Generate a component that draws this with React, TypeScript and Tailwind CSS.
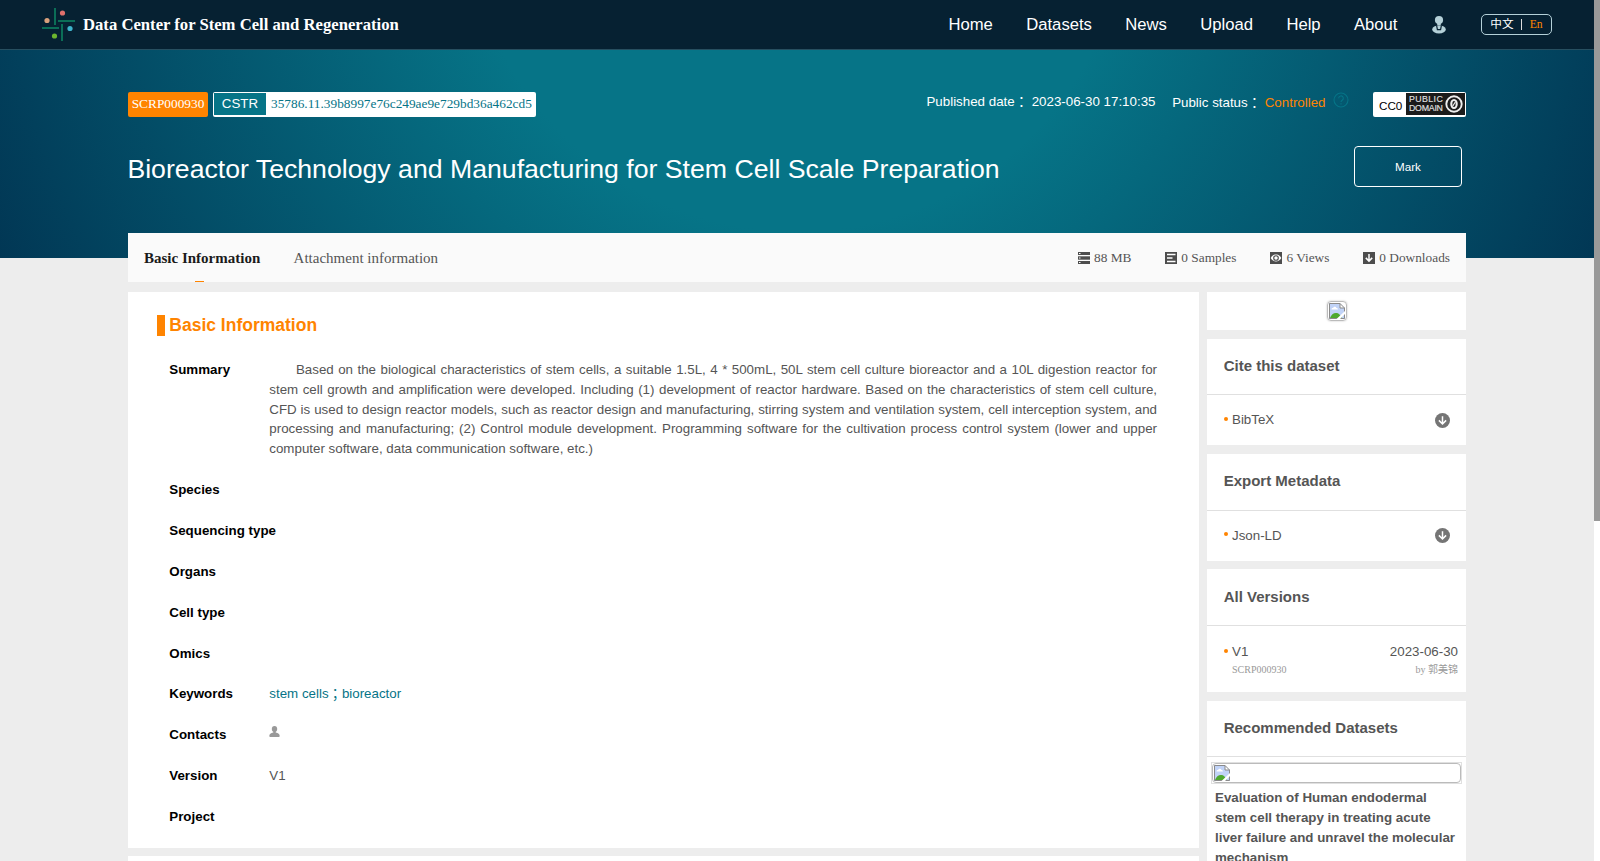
import React from 'react'

const SANS = "font-['Liberation_Sans','Noto_Sans_CJK_JP',sans-serif]"
const SERIF = "font-['Liberation_Serif','Noto_Sans_CJK_JP',serif]"

const navItems = ['Home', 'Datasets', 'News', 'Upload', 'Help', 'About']

const Logo = () => (
    <svg width="33" height="33" viewBox="0 0 33 33" className="shrink-0">
        <g fill="#0b6e57">
            <rect x="12" y="0" width="2" height="17" />
            <rect x="16" y="12" width="17" height="2" />
            <rect x="19" y="16" width="2" height="17" />
            <rect x="0" y="19" width="17" height="2" />
        </g>
        <circle cx="20.5" cy="5" r="2.6" fill="#e0706c" />
        <circle cx="5" cy="12.5" r="2.6" fill="#d9a07c" />
        <circle cx="28" cy="20.5" r="2.6" fill="#3fb4cc" />
        <circle cx="12.5" cy="28" r="2.6" fill="#6cb52f" />
    </svg>
)

const UserIcon = () => (
    <svg width="14" height="18" viewBox="0 0 14 18" className="shrink-0" fill="#b4d0d8">
        <circle cx="7" cy="4.100" r="4.100" />
        <path d="M5.200 7h3.600v2.500H5.200z" />
        <ellipse cx="7" cy="13.400" rx="6.800" ry="4" />
        <path d="M4.600 9.400L5.400 13.600H8.600L9.400 9.400" fill="none" stroke="#062132" strokeWidth="1.200" />
    </svg>
)

const ContactIcon = () => (
    <svg width="11" height="11" viewBox="0 0 11 11" className="mt-px block" fill="#999">
        <ellipse cx="5.500" cy="2.900" rx="2.700" ry="2.900" />
        <path d="M4.300 5h2.400v1.600c2.600.5 4 1.500 4 3.400c0 .6-.3 1-.9 1H1.200c-.6 0-.9-.4-.9-1c0-1.900 1.400-2.900 4-3.400z" />
    </svg>
)

const HelpIcon = () => (
    <svg width="16" height="16" viewBox="0 0 16 16" className="shrink-0" fill="none" stroke="#067487" strokeWidth="1.100">
        <circle cx="8" cy="8" r="7" />
        <path d="M5.700 6.300a2.300 2.300 0 1 1 3.500 1.900c-.8.500-1.200.9-1.200 1.900M8 11.200v1.200" />
    </svg>
)

const PublicDomain = () => (
    <div className="flex h-[22px] w-[59px] items-center bg-[#1b1b1b] pl-[3px] text-[#dedede]">
        <div className={`${SANS} w-[35px] text-[8.8px] leading-[9px] [-webkit-text-stroke:0.2px_#dedede]`}>
            <div className="tracking-[0.4px]">PUBLIC</div>
            <div className="tracking-[-0.25px]">DOMAIN</div>
        </div>
        <svg width="18" height="18" viewBox="0 0 18 18" className="ml-[1px] shrink-0" fill="none" stroke="#eee">
            <circle cx="9" cy="9" r="7.700" strokeWidth="1.900" />
            <ellipse cx="9" cy="9" rx="2.700" ry="4" strokeWidth="2.100" />
            <path d="M7.800 11L10.300 7" strokeWidth="1.200" />
        </svg>
    </div>
)

const BrokenImage = () => (
    <svg width="16" height="16" viewBox="0 0 16 16" className="block shrink-0">
        <path d="M0 0H11L16 5V16H0z" fill="#c1d3f7" />
        <path d="M2.500 6.400c0-1 .8-1.500 1.600-1.400c.5-1.600 2.900-1.600 3.300 0c1 0 1.600.6 1.500 1.400z" fill="#fff" />
        <path d="M1 15c1.200-3.500 3.700-5.300 6.500-5c2 .2 3.500 1.500 5.500 5z" fill="#4fa92f" />
        <path d="M11 .500H.5V15.500H15.500V5" fill="none" stroke="#8a8a8a" />
        <path d="M11 0V5H16z" fill="#fff" />
        <path d="M11 .500V5H15.500L11 .500" fill="none" stroke="#8a8a8a" />
        <path d="M16 8L7.500 16H11L16 11z" fill="#fff" />
    </svg>
)

const DownArrow = () => (
    <svg width="15" height="15" viewBox="0 0 15 15" className="block shrink-0">
        <circle cx="7.500" cy="7.500" r="7.500" fill="#757575" />
        <path d="M7.500 3.200V10.800M3.900 7.400L7.500 11L11.100 7.400" fill="none" stroke="#fff" strokeWidth="1.500" />
    </svg>
)

const StatIcon = ({ type }: { type: string }) => (
    <svg width="12" height="12" viewBox="0 0 12 12" className="mr-1 shrink-0">
        {type !== 'size' && <rect width="12" height="12" fill="#4d4d4d" />}
        {type === 'size' && (
            <g>
                <rect width="12" height="3" fill="#4d4d4d" />
                <rect y="4.300" width="12" height="3.400" fill="#4d4d4d" />
                <rect y="9" width="12" height="3" fill="#4d4d4d" />
                <path d="M1 1.500h1.500M1 6h1.500M1 10.500h1.500" stroke="#fff" />
            </g>
        )}
        {type === 'samples' && <path d="M2 2.500h8.500M2 6h5.500M2 9.500h8.500" stroke="#fff" strokeWidth="1.400" />}
        {type === 'views' && (
            <g>
                <path d="M.7 6C3 1.400 9 1.400 11.300 6C9 10.600 3 10.600.7 6z" fill="#fff" />
                <circle cx="6" cy="6" r="2.300" fill="#fff" stroke="#4d4d4d" strokeWidth="1.100" />
            </g>
        )}
        {type === 'downloads' && <path d="M6 2V9M2.800 5.900L6 9.100L9.200 5.900" fill="none" stroke="#fff" strokeWidth="1.500" />}
    </svg>
)

// full-width punctuation sits too high next to latin text
const Punct = ({ children }: { children: string }) => <span className="relative top-px">{children}</span>

const stats = [
    { type: 'size', label: '88 MB' },
    { type: 'samples', label: '0 Samples' },
    { type: 'views', label: '6 Views' },
    { type: 'downloads', label: '0 Downloads' },
]

const summary =
    'Based on the biological characteristics of stem cells, a suitable 1.5L, 4 * 500mL, 50L stem cell culture bioreactor and a 10L digestion reactor for stem cell growth and amplification were developed. Including (1) development of reactor hardware. Based on the characteristics of stem cell culture, CFD is used to design reactor models, such as reactor design and manufacturing, stirring system and ventilation system, cell interception system, and processing and manufacturing; (2) Control module development. Programming software for the cultivation process control system (lower and upper computer software, data communication software, etc.)'

const fields: { label: string; value?: React.ReactNode; className?: string }[] = [
    { label: 'Summary', value: <p className="indent-[26.67px] text-justify">{summary}</p> },
    { label: 'Species' },
    { label: 'Sequencing type' },
    { label: 'Organs' },
    { label: 'Cell type' },
    { label: 'Omics' },
    {
        label: 'Keywords',
        className: '-mt-px',
        value: (
            <span className="text-[#067487]">
                stem cells<Punct>；</Punct>bioreactor
            </span>
        ),
    },
    { label: 'Contacts', value: <ContactIcon /> },
    { label: 'Version', value: 'V1' },
    { label: 'Project' },
]

type SideCardProps = {
    title: string
    className: string
    titleClass?: string
    children: React.ReactNode
}

const SideCard = ({ title, className, titleClass = 'h-[56px] leading-[54px]', children }: SideCardProps) => (
    <div className={`bg-white ${className}`}>
        <h3 className={`border-b border-[#e0e0e0] pl-[16.67px] text-[15px] font-bold ${titleClass}`}>{title}</h3>
        {children}
    </div>
)

const FileRow = ({ name, className, dotClass }: { name: string; className: string; dotClass: string }) => (
    <div className={`flex items-center pl-[17px] pr-4 ${className}`}>
        <span className={`mr-1 size-1 self-start rounded-full bg-[#ff8400] ${dotClass}`}></span>
        <span className="flex-1">{name}</span>
        <DownArrow />
    </div>
)

const Header = () => (
    <header className="flex h-[50px] items-center border-b border-[#274f60] bg-[#062132] pl-[42px] pr-[42px] text-white">
        <Logo />
        <div className={`${SERIF} ml-2 flex-1 whitespace-nowrap text-[16.67px] font-bold`}>
            Data Center for Stem Cell and Regeneration
        </div>
        <nav className="mr-[0.5px] flex gap-[33.33px] text-[16.67px]">
            {navItems.map((item) => (
                <a key={item}>{item}</a>
            ))}
        </nav>
        <div className="ml-[34px] mr-[35px]">
            <UserIcon />
        </div>
        <div className={`${SERIF} flex h-[21px] w-[71px] items-center justify-center rounded-[5px] border border-[#b4d0d8] text-[11.67px]`}>
            <span>中文</span>
            <span className="ml-[7px] mr-[8px] h-[11px] w-px bg-[#ddd]"></span>
            <span className="text-[#ff8400]">En</span>
        </div>
    </header>
)

const Hero = () => (
    <div className="h-[208px] bg-[radial-gradient(circle_920px_at_50%_-150px,#067487_0%,#067487_36%,#013452_98%)] px-32 pt-[42px] text-[13.33px] text-white">
        <div className="flex h-[25px]">
            <div className={`${SERIF} w-20 rounded-[2px] bg-[#ff8400] text-center leading-[24px]`}>SCRP000930</div>
            <div className="ml-[5px] flex w-[323px] rounded-[2px] bg-white p-px">
                <div className="h-[22px] w-[52px] bg-[#067487] text-center leading-[22px]">CSTR</div>
                <div className={`${SERIF} ml-[5px] leading-[22px] text-[#067487]`}>35786.11.39b8997e76c249ae9e729bd36a462cd5</div>
            </div>
            <div className="ml-auto mr-[16.67px] whitespace-nowrap leading-[19px]">
                Published date<Punct>：</Punct> 2023-06-30 17:10:35
            </div>
            <div className="whitespace-nowrap leading-[21px]">
                Public status<Punct>：</Punct> <span className="text-[#ff8400]">Controlled</span>
            </div>
            <div className="ml-[7px] mr-[24.5px]">
                <HelpIcon />
            </div>
            <div className="flex w-[93px] justify-between rounded-[2px] bg-white p-px">
                <span className="pl-[5px] text-[11.67px] leading-[25px] text-black">CC0</span>
                <PublicDomain />
            </div>
        </div>
        <div className="-ml-[0.6px] mt-[29px] flex justify-between pr-1">
            <h1 className="text-[26.67px] leading-[46px]">Bioreactor Technology and Manufacturing for Stem Cell Scale Preparation</h1>
            <button className="h-[41px] w-[108px] rounded-[4px] border border-white text-[11.67px]">Mark</button>
        </div>
    </div>
)

const App = () => {
    return (
        <div className={`${SANS} flex h-[861px] w-[1600px] overflow-hidden bg-[#ededed] text-[13.33px] text-[#555]`}>
            <div className="w-[1594px]">
                <Header />
                <Hero />
                <div className={`${SERIF} relative mx-32 -mt-[25px] flex h-[49px] items-center bg-[#fafafa] px-4`}>
                    <div className="relative flex h-full items-center pt-px text-[15px] font-bold text-[#1a1a1a]">
                        Basic Information
                        <span className="absolute bottom-0 left-[51px] h-px w-[9px] bg-[#ff8400]"></span>
                    </div>
                    <div className="ml-[33.33px] pt-px text-[15px]">Attachment information</div>
                    <div className="ml-auto flex gap-[33.9px] pt-px">
                        {stats.map((stat) => (
                            <div key={stat.type} className="flex items-center">
                                <StatIcon type={stat.type} />
                                {stat.label}
                            </div>
                        ))}
                    </div>
                </div>

                <div className="mx-32 mt-[10px] flex justify-between leading-[20px]">
                    <div className="w-[1071px]">
                        <div className="h-[556px] bg-white pl-[29px] pr-[42px] pt-[23px]">
                            <h2 className="flex h-[21px] text-[17.5px] font-bold leading-[20px] text-[#ff8400]">
                                <span className="mr-[4.3px] h-[21px] w-2 bg-[#ff8400]"></span>
                                Basic Information
                            </h2>
                            <div className="ml-[12.3px] mt-[24.3px] leading-[19.66px]">
                                {fields.map((field) => (
                                    <div key={field.label} className={`mb-[21.34px] flex min-h-[19.66px] ${field.className ?? ''}`}>
                                        <div className="w-[100px] shrink-0 whitespace-nowrap font-bold text-black">{field.label}</div>
                                        <div className="flex-1">{field.value}</div>
                                    </div>
                                ))}
                            </div>
                        </div>
                        <div className="mt-2 h-10 bg-white"></div>
                    </div>

                    <div className="w-[259px]">
                        <div className="flex h-[38px] items-center justify-center bg-white">
                            <div className="ml-px rounded-[4px] border border-[#bbb] p-[1px] shadow-[0_0_2px_#bbb]">
                                <BrokenImage />
                            </div>
                        </div>
                        <SideCard title="Cite this dataset" className="mt-[9px] h-[106px]">
                            <FileRow name="BibTeX" className="h-[50px]" dotClass="mt-[22px]" />
                        </SideCard>
                        <SideCard title="Export Metadata" className="mt-[9px] h-[107px]" titleClass="h-[57px] leading-[54px]">
                            <FileRow name="Json-LD" className="h-[49px] [&>span:nth-child(2)]:pt-px" dotClass="mt-[21px]" />
                        </SideCard>
                        <SideCard title="All Versions" className="mt-2 h-[123px]" titleClass="h-[57px] leading-[56px]">
                            <div className="flex justify-between pl-[17px] pr-2 pt-4">
                                <div className="flex">
                                    <span className="mr-1 mt-[7px] size-1 rounded-full bg-[#ff8400]"></span>
                                    <div>
                                        <div>V1</div>
                                        <div className={`${SERIF} text-[10px] leading-[16px] text-[#999]`}>SCRP000930</div>
                                    </div>
                                </div>
                                <div className="text-right">
                                    <div>2023-06-30</div>
                                    <div className={`${SERIF} text-[10px] leading-[16px] text-[#999]`}>by 郭美锦</div>
                                </div>
                            </div>
                        </SideCard>
                        <SideCard title="Recommended Datasets" className="mt-[9px] h-[200px]">
                            <div className="mx-1 mt-[5px] h-[22px] w-[251px] border border-[#e0e0e0]">
                                <div className="h-5 rounded-[4px] border border-[#bbb] p-px">
                                    <BrokenImage />
                                </div>
                            </div>
                            <p className="mx-2 mt-[4px] font-bold">
                                Evaluation of Human endodermal stem cell therapy in treating acute liver failure and unravel the molecular mechanism
                            </p>
                        </SideCard>
                    </div>
                </div>
            </div>
            {/* scrollbar */}
            <div className="w-[6px] bg-white">
                <div className="h-[521px] bg-[#999]"></div>
            </div>
        </div>
    )
}

export default App
